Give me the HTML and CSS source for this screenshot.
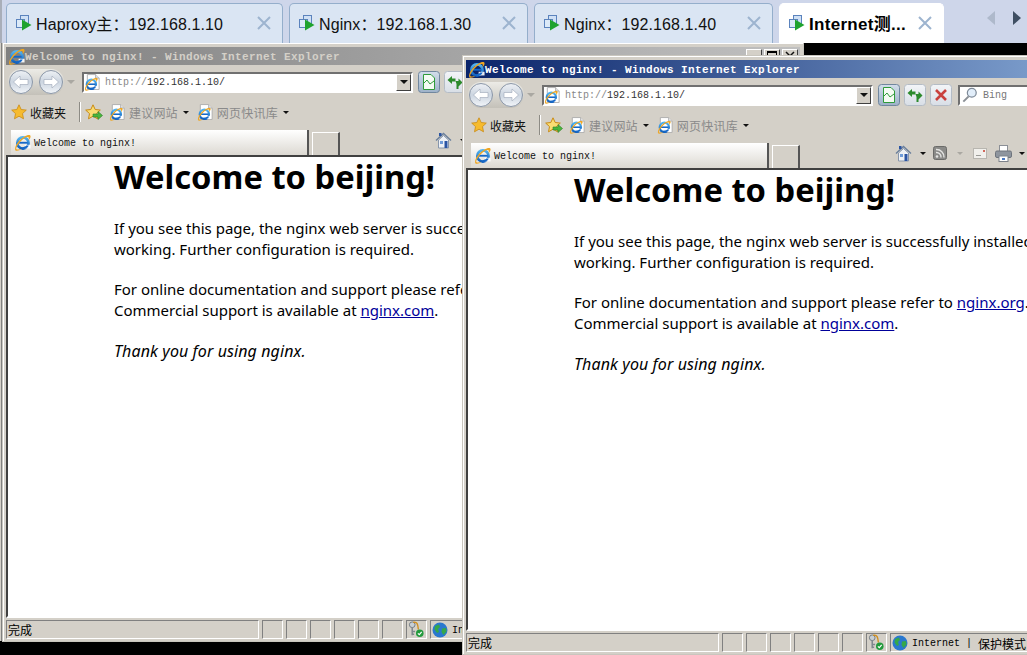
FILE: index.html
```html
<!DOCTYPE html>
<html>
<head>
    <title>Welcome to nginx!</title>
    <link rel="stylesheet" href="styles.css">
</head>
<body>
    <svg class="defs" width="0" height="0">
        <defs>
            <linearGradient id="glass" x1="0" y1="0" x2="0" y2="1">
                <stop offset="0" stop-color="#eef1f5"/>
                <stop offset=".5" stop-color="#ccd5e0"/>
                <stop offset="1" stop-color="#f2f5f9"/>
            </linearGradient>
            <linearGradient id="iceblue" x1="0" y1="0" x2="0" y2="1">
                <stop offset="0" stop-color="#53b4f0"/>
                <stop offset="1" stop-color="#0f5fbd"/>
            </linearGradient>
            <linearGradient id="press" x1="0" y1="0" x2="0" y2="1">
                <stop offset="0" stop-color="#d3deea"/>
                <stop offset=".55" stop-color="#b4c5d8"/>
                <stop offset="1" stop-color="#9db1c8"/>
            </linearGradient>
            <linearGradient id="btn" x1="0" y1="0" x2="0" y2="1">
                <stop offset="0" stop-color="#f3f5f8"/>
                <stop offset="1" stop-color="#d8dee6"/>
            </linearGradient>
            <symbol id="ie" viewBox="0 0 20 20">
                <circle cx="10.500" cy="10.500" r="6.600" fill="none" stroke="url(#iceblue)" stroke-width="3.200"/>
                <path d="M5.500 10.300H16" stroke="#1668c8" stroke-width="2.200"/>
                <path d="M12.500 12.700H19.500V17H12.500Z" fill="#fff" fill-opacity=".9"/>
                <path d="M10 15.300C12 15.300 13.500 14.600 14.500 13.500H17.300C16 16.500 13 18 10 18Z" fill="#1668c8"/>
                <path d="M1.500 19C.2 15.500 5 7 12 3.200C15.500 1.200 19.300 .3 19.500 2.800C19.600 4.500 18.300 6.300 17 7.500C17.500 5.500 17.800 3.800 16.500 3.500C12 2.800 3 13 2.500 17.500C4 18.500 7 18.200 9 17.300C6.500 19.500 2.800 20.300 1.500 19Z" fill="#eda522"/>
            </symbol>
            <symbol id="page" viewBox="0 0 16 18">
                <path d="M1.500 .5H11L15 4.500V17.500H1.500Z" fill="#fff" stroke="#a9a9a9"/>
                <path d="M11 .5V4.500H15" fill="#e6e6e6" stroke="#a9a9a9"/>
            </symbol>
            <symbol id="vm" viewBox="0 0 16 16">
                <rect x="4.500" y=".5" width="8" height="8" fill="#cfe0f5" stroke="#5b83bd"/>
                <rect x=".5" y="4.500" width="8" height="8" fill="#dceaf8" stroke="#5b83bd"/>
                <path d="M6 4.500L15.500 10L6 15.500Z" fill="#1fa32e"/>
            </symbol>
            <symbol id="close" viewBox="0 0 14 14">
                <path d="M1 1L13 13M13 1L1 13" stroke="#9db4cf" stroke-width="2"/>
            </symbol>
            <symbol id="winclose" viewBox="0 0 12 10">
                <path d="M2 1L10 9M10 1L2 9" stroke="#111" stroke-width="1.500"/>
            </symbol>
            <symbol id="star" viewBox="0 0 16 16">
                <path d="M8 .8L10.200 5.500L15.300 6.100L11.500 9.600L12.500 14.800L8 12.200L3.500 14.800L4.500 9.600L.7 6.100L5.800 5.500Z" fill="#f6bb2e" stroke="#c98a14" stroke-width=".8"/>
            </symbol>
            <symbol id="star-add" viewBox="0 0 18 17">
                <path d="M8 .8L10.200 5.500L15.300 6.100L11.500 9.600L12.500 14.800L8 12.200L3.500 14.800L4.500 9.600L.7 6.100L5.800 5.500Z" fill="#f9dd72" stroke="#c98a14"/>
                <path d="M8 10H13V7.500L17.500 11.500L13 15.500V13H8Z" fill="#49b53d" stroke="#2d7f26" stroke-width=".6"/>
            </symbol>
            <symbol id="arrow-left" viewBox="0 0 26 26">
                <circle cx="13" cy="13" r="11.500" fill="url(#glass)" stroke="#8b97a8"/>
                <path d="M5.500 13L12 7V10.500H20V15.500H12V19Z" fill="#fff" stroke="#9aa5b5" stroke-width=".6"/>
            </symbol>
            <symbol id="arrow-right" viewBox="0 0 26 26">
                <circle cx="13" cy="13" r="11.500" fill="url(#glass)" stroke="#8b97a8"/>
                <path d="M20.500 13L14 7V10.500H6V15.500H14V19Z" fill="#fff" stroke="#9aa5b5" stroke-width=".6"/>
            </symbol>
            <symbol id="chart" viewBox="0 0 22 22">
                <rect x=".5" y=".5" width="21" height="21" rx="3" fill="url(#press)" stroke="#71879e"/>
                <path d="M5.500 3.500H13L16.500 7V18.500H5.500Z" fill="#f4fbf3" stroke="#2f9b3a"/>
                <path d="M6 12L9 9L12 13L16 10" fill="none" stroke="#2f9b3a"/>
            </symbol>
            <symbol id="refresh" viewBox="0 0 22 22">
                <rect x=".5" y=".5" width="21" height="21" rx="3" fill="url(#btn)" stroke="#b4bcc6"/>
                <path d="M3.500 9L8 5V7.500H11.500V10.500H8V13Z" fill="#2c8a2c"/>
                <path d="M18.500 11.500L14.500 7.500V10H11.500L12.500 13V18H14.500V13.500L14.500 15.500Z" fill="#2c8a2c"/>
            </symbol>
            <symbol id="stop" viewBox="0 0 22 22">
                <rect x=".5" y=".5" width="21" height="21" rx="3" fill="url(#btn)" stroke="#b4bcc6"/>
                <path d="M6 6L16 16M16 6L6 16" stroke="#c9413e" stroke-width="2.600"/>
            </symbol>
            <symbol id="lens" viewBox="0 0 18 18">
                <circle cx="11" cy="6.500" r="5" fill="#e2eefa" stroke="#7f8b99" stroke-width="1.400"/>
                <path d="M7.500 10.500L1.500 16.500" stroke="#8a8f95" stroke-width="2.200"/>
            </symbol>
            <symbol id="home" viewBox="0 0 17 17">
                <path d="M1 8.500L8.500 1.500L16 8.500" fill="none" stroke="#6a7f9c" stroke-width="1.400"/>
                <path d="M3.500 8L8.500 3.500L13.500 8V16H3.500Z" fill="#eef1f6" stroke="#8796ac"/>
                <rect x="9.500" y="9" width="3" height="7" fill="#2a54a3"/>
                <rect x="5" y="9" width="3" height="3" fill="#6f9bd8"/>
                <rect x="4" y="1" width="2.500" height="3" fill="#2a54a3"/>
            </symbol>
            <symbol id="feed" viewBox="0 0 14 14">
                <rect x=".5" y=".5" width="13" height="13" rx="2" fill="#8a8a88" stroke="#6b6b69"/>
                <circle cx="4" cy="10.500" r="1.300" fill="#e4e4e2"/>
                <path d="M3 6.500A4.500 4.500 0 0 1 8 11.500M3 3.500A7.500 7.500 0 0 1 11 11.500" fill="none" stroke="#e4e4e2" stroke-width="1.400"/>
            </symbol>
            <symbol id="mail" viewBox="0 0 14 11">
                <rect x=".5" y=".5" width="13" height="10" fill="#f1f0ec" stroke="#b8b6b0"/>
                <path d="M3 7.500H8" stroke="#9a9a96"/>
                <rect x="10" y="2" width="2" height="2" fill="#d2685c"/>
            </symbol>
            <symbol id="printer" viewBox="0 0 17 17">
                <rect x="4.500" y=".5" width="8" height="6" fill="#fff" stroke="#8b8f96"/>
                <rect x=".5" y="6" width="16" height="6.500" rx="1.500" fill="#8e959e" stroke="#6e747c"/>
                <rect x="4" y="11" width="9" height="5.500" fill="#fff" stroke="#7d838b"/>
                <rect x="7" y="13" width="3" height="2" fill="#4979c4"/>
            </symbol>
            <symbol id="keys" viewBox="0 0 18 18">
                <circle cx="5" cy="4" r="3" fill="#c8cfd4" stroke="#747b82"/>
                <path d="M5 7V15M5 11H8M5 14H7" stroke="#7f878e" stroke-width="1.600"/>
                <path d="M6 1.500C10 .5 11 3 11.500 9" fill="none" stroke="#d08f1e" stroke-width="1.500"/>
                <circle cx="13" cy="13" r="4" fill="#229a3c"/>
                <path d="M11 13L12.500 14.500L15 11.500" fill="none" stroke="#fff" stroke-width="1.200"/>
            </symbol>
            <symbol id="globe" viewBox="0 0 16 16">
                <circle cx="8" cy="8" r="7.500" fill="#2a78cf"/>
                <path d="M3 4L7 2.500L8 5L6 7L7 10L5 11L2.500 7.500Z" fill="#35a84a"/>
                <path d="M10 6.500L14 6L14.500 9.500L11.500 13L9.500 10Z" fill="#35a84a"/>
            </symbol>
        </defs>
    </svg>

    <div class="tabbar">
        <div class="vmtab">
            <svg class="vmtab-icon"><use href="#vm"/></svg>
            <span class="vmtab-name">Haproxy主：192.168.1.10</span>
            <svg class="vmtab-close"><use href="#close"/></svg>
        </div>
        <div class="vmtab">
            <svg class="vmtab-icon"><use href="#vm"/></svg>
            <span class="vmtab-name">Nginx：192.168.1.30</span>
            <svg class="vmtab-close"><use href="#close"/></svg>
        </div>
        <div class="vmtab">
            <svg class="vmtab-icon"><use href="#vm"/></svg>
            <span class="vmtab-name">Nginx：192.168.1.40</span>
            <svg class="vmtab-close"><use href="#close"/></svg>
        </div>
        <div class="vmtab vmtab-active">
            <svg class="vmtab-icon"><use href="#vm"/></svg>
            <span class="vmtab-name">Internet测...</span>
            <svg class="vmtab-close"><use href="#close"/></svg>
        </div>
        <div class="tab-scroll">
            <span class="scroll-left"></span>
            <span class="scroll-right"></span>
        </div>
    </div>

    <div class="desktop">
        <div class="window window-back">
            <div class="titlebar">
                <svg class="title-logo"><use href="#ie"/></svg>
                <span class="title-text">Welcome to nginx! - Windows Internet Explorer</span>
                <div class="winbtns">
                    <span class="winbtn"></span>
                    <span class="winbtn winbtn-max"></span>
                    <span class="winbtn"><svg class="winclose"><use href="#winclose"/></svg></span>
                </div>
            </div>
            <div class="navrow">
                <div class="navbtns">
                    <svg class="navbtn"><use href="#arrow-left"/></svg>
                    <svg class="navbtn"><use href="#arrow-right"/></svg>
                </div>
                <span class="caret caret-light"></span>
                <div class="address">
                    <svg class="page-icon"><use href="#page"/></svg>
                    <svg class="page-logo"><use href="#ie"/></svg>
                    <span class="url"><span class="url-dim">http://</span>192.168.1.10/</span>
                    <span class="combo"><span class="caret"></span></span>
                </div>
                <svg class="toolbtn"><use href="#chart"/></svg>
                <svg class="toolbtn"><use href="#refresh"/></svg>
                <svg class="toolbtn"><use href="#stop"/></svg>
                <div class="search">
                    <svg class="lens"><use href="#lens"/></svg>
                    <span class="search-text">Bing</span>
                </div>
            </div>
            <div class="favrow">
                <svg class="fav-star"><use href="#star"/></svg>
                <span class="fav-label">收藏夹</span>
                <span class="fav-sep"></span>
                <svg class="fav-add"><use href="#star-add"/></svg>
                <div class="fav-link">
                    <svg class="page-icon"><use href="#page"/></svg>
                    <svg class="page-logo"><use href="#ie"/></svg>
                    <span class="fav-text">建议网站</span>
                    <span class="caret"></span>
                </div>
                <div class="fav-link">
                    <svg class="page-icon"><use href="#page"/></svg>
                    <svg class="page-logo"><use href="#ie"/></svg>
                    <span class="fav-text">网页快讯库</span>
                    <span class="caret"></span>
                </div>
            </div>
            <div class="ietabs">
                <div class="ietab">
                    <svg class="ietab-logo"><use href="#ie"/></svg>
                    <span class="ietab-text">Welcome to nginx!</span>
                </div>
                <div class="ietab-new"></div>
                <div class="cmdbar">
                    <svg class="cmd-home"><use href="#home"/></svg>
                    <span class="caret"></span>
                    <svg class="cmd-feed"><use href="#feed"/></svg>
                    <span class="caret caret-light"></span>
                    <svg class="cmd-mail"><use href="#mail"/></svg>
                    <svg class="cmd-print"><use href="#printer"/></svg>
                    <span class="caret"></span>
                </div>
            </div>
            <div class="page">
                <h1>Welcome to beijing!</h1>
                <p>If you see this page, the nginx web server is successfully installed and<br>working. Further configuration is required.</p>
                <p>For online documentation and support please refer to <a href="#">nginx.org</a>.<br>Commercial support is available at <a href="#">nginx.com</a>.</p>
                <p class="thanks"><em>Thank you for using nginx.</em></p>
            </div>
            <div class="statusbar">
                <span class="status-main">完成</span>
                <span class="status-cell"></span>
                <span class="status-cell"></span>
                <span class="status-cell"></span>
                <span class="status-cell"></span>
                <span class="status-cell"></span>
                <span class="status-cell"></span>
                <span class="status-cell"><svg class="status-keys"><use href="#keys"/></svg></span>
                <span class="status-zone">
                    <svg class="status-globe"><use href="#globe"/></svg>
                    <span class="zone-text">Internet | </span><span class="zone-mode">保护模式</span>
                </span>
            </div>
        </div>

        <div class="window window-front">
            <div class="titlebar">
                <svg class="title-logo"><use href="#ie"/></svg>
                <span class="title-text">Welcome to nginx! - Windows Internet Explorer</span>
            </div>
            <div class="navrow">
                <div class="navbtns">
                    <svg class="navbtn"><use href="#arrow-left"/></svg>
                    <svg class="navbtn"><use href="#arrow-right"/></svg>
                </div>
                <span class="caret caret-light"></span>
                <div class="address">
                    <svg class="page-icon"><use href="#page"/></svg>
                    <svg class="page-logo"><use href="#ie"/></svg>
                    <span class="url"><span class="url-dim">http://</span>192.168.1.10/</span>
                    <span class="combo"><span class="caret"></span></span>
                </div>
                <svg class="toolbtn"><use href="#chart"/></svg>
                <svg class="toolbtn"><use href="#refresh"/></svg>
                <svg class="toolbtn"><use href="#stop"/></svg>
                <div class="search">
                    <svg class="lens"><use href="#lens"/></svg>
                    <span class="search-text">Bing</span>
                </div>
            </div>
            <div class="favrow">
                <svg class="fav-star"><use href="#star"/></svg>
                <span class="fav-label">收藏夹</span>
                <span class="fav-sep"></span>
                <svg class="fav-add"><use href="#star-add"/></svg>
                <div class="fav-link">
                    <svg class="page-icon"><use href="#page"/></svg>
                    <svg class="page-logo"><use href="#ie"/></svg>
                    <span class="fav-text">建议网站</span>
                    <span class="caret"></span>
                </div>
                <div class="fav-link">
                    <svg class="page-icon"><use href="#page"/></svg>
                    <svg class="page-logo"><use href="#ie"/></svg>
                    <span class="fav-text">网页快讯库</span>
                    <span class="caret"></span>
                </div>
            </div>
            <div class="ietabs">
                <div class="ietab">
                    <svg class="ietab-logo"><use href="#ie"/></svg>
                    <span class="ietab-text">Welcome to nginx!</span>
                </div>
                <div class="ietab-new"></div>
                <div class="cmdbar">
                    <svg class="cmd-home"><use href="#home"/></svg>
                    <span class="caret"></span>
                    <svg class="cmd-feed"><use href="#feed"/></svg>
                    <span class="caret caret-light"></span>
                    <svg class="cmd-mail"><use href="#mail"/></svg>
                    <svg class="cmd-print"><use href="#printer"/></svg>
                    <span class="caret"></span>
                </div>
            </div>
            <div class="page">
                <h1>Welcome to beijing!</h1>
                <p>If you see this page, the nginx web server is successfully installed and<br>working. Further configuration is required.</p>
                <p>For online documentation and support please refer to <a href="#">nginx.org</a>.<br>Commercial support is available at <a href="#">nginx.com</a>.</p>
                <p class="thanks"><em>Thank you for using nginx.</em></p>
            </div>
            <div class="statusbar">
                <span class="status-main">完成</span>
                <span class="status-cell"></span>
                <span class="status-cell"></span>
                <span class="status-cell"></span>
                <span class="status-cell"></span>
                <span class="status-cell"></span>
                <span class="status-cell"></span>
                <span class="status-cell"><svg class="status-keys"><use href="#keys"/></svg></span>
                <span class="status-zone">
                    <svg class="status-globe"><use href="#globe"/></svg>
                    <span class="zone-text">Internet | </span><span class="zone-mode">保护模式</span>
                </span>
            </div>
        </div>
    </div>
</body>
</html>
```

FILE: styles.css
```css
html, body {
    height: 655px;
    margin: 0;
    padding: 0;
    overflow: hidden;
    font-family: "Liberation Sans", "Noto Sans CJK SC", sans-serif;
}

.defs {
    position: absolute;
}

/* top tab strip */
.tabbar {
    display: flex;
    gap: 6px;
    height: 40px;
    padding: 3px 0 0 6px;
    background-color: #ced6ea;
    border-left: 2px solid #a9aeb8;
    box-sizing: content-box;
}

.vmtab {
    display: flex;
    align-items: center;
    flex: none;
    width: 239px;
    box-sizing: border-box;
    padding: 0 9px 2px 9px;
    background-color: #dae5f3;
    border: 1px solid #94aecb;
    border-bottom: none;
    border-radius: 5px 5px 0 0;
}

.vmtab:first-child {
    width: 277px;
    margin-left: -2px;
}

.vmtab-active {
    width: 165px;
    background-color: #fff;
    border-color: #fff;
}

.vmtab-icon {
    flex: none;
    width: 16px;
    height: 16px;
    margin-right: 4px;
}

.vmtab-name {
    flex: 1;
    font-size: 16px;
    letter-spacing: .1px;
    white-space: nowrap;
    color: #111;
}

.vmtab-active .vmtab-name {
    font-size: 17px;
    font-weight: bold;
    letter-spacing: .3px;
    color: #000;
}

.vmtab-close {
    flex: none;
    width: 14px;
    height: 14px;
    margin-right: 2px;
}

.tab-scroll {
    display: flex;
    align-items: center;
    gap: 18px;
    margin-left: 37px;
    height: 30px;
}

.scroll-left {
    border-style: solid;
    border-width: 7px 8px 7px 0;
    border-color: transparent #aeb9cb transparent transparent;
}

.scroll-right {
    border-style: solid;
    border-width: 7px 0 7px 8px;
    border-color: transparent transparent transparent #3f4f63;
}

/* the console area with the two browser windows on it */
.desktop {
    position: relative;
    height: 612px;
    background-color: #000;
    overflow: hidden;
}

.window {
    position: absolute;
    display: flex;
    flex-direction: column;
    width: 800px;
    height: 598px;
    box-sizing: border-box;
    padding: 3px 3px 2px 2px;
    background-color: #d4d0c8;
    border-top: 1px solid #fff;
    border-left: 1px solid #fff;
    box-shadow: 0 0 0 1px #c9c6be;
}

.window-back {
    left: 3px;
    top: 0;
    box-shadow: 0 0 0 1px #c9c6be, -2px 0 0 #808080, -3px 0 0 #d4d0c8;
}

.window-front {
    left: 463px;
    top: 13px;
}

.titlebar {
    display: flex;
    align-items: center;
    flex: none;
    height: 18px;
    padding-left: 2px;
    background: linear-gradient(to right, #808080, #c0c0c0);
}

.window-front .titlebar {
    background: linear-gradient(to right, #0a246a, #a6caf0);
}

.title-logo {
    flex: none;
    width: 17px;
    height: 17px;
}

.title-text {
    flex: 1;
    padding-top: 1px;
    font-family: "Liberation Mono", "Noto Sans CJK SC", monospace;
    font-size: 11px;
    font-weight: bold;
    letter-spacing: .4px;
    color: #d4d0c8;
    white-space: nowrap;
}

.window-front .title-text {
    color: #fff;
}

.winbtns {
    display: flex;
    gap: 2px;
    padding-right: 2px;
}

.winbtn {
    display: flex;
    align-items: center;
    justify-content: center;
    width: 16px;
    height: 14px;
    box-sizing: border-box;
    background-color: #d4d0c8;
    border: 1px solid;
    border-color: #fff #404040 #404040 #fff;
}

.winbtn-max::before {
    content: "";
    width: 10px;
    height: 10px;
    box-sizing: border-box;
    border: 1px solid #000;
    border-top-width: 2px;
}

.winclose {
    width: 12px;
    height: 10px;
}

.navrow {
    display: flex;
    align-items: center;
    flex: none;
    height: 34px;
    padding: 0 0 0 2px;
}

.navbtns {
    display: flex;
    gap: 4px;
    flex: none;
    width: 56px;
    border-radius: 14px;
    background: linear-gradient(to bottom, #ecebe6, #c4c1b9);
}

.navbtn {
    width: 26px;
    height: 26px;
}

.caret {
    display: inline-block;
    flex: none;
    width: 0;
    height: 0;
    border-style: solid;
    border-width: 3px 3px 0 3px;
    border-color: #111 transparent transparent transparent;
}

.caret-light {
    border-color: #aaa8a2 transparent transparent transparent;
}

.navrow > .caret {
    margin-left: 3px;
    border-width: 4px 4px 0 4px;
}

.address {
    display: flex;
    align-items: center;
    flex: none;
    width: 331px;
    height: 21px;
    margin: 0 5px 0 7px;
    box-sizing: border-box;
    background-color: #fff;
    border: 2px solid;
    border-color: #707070 #fff #fff #707070;
}

.page-icon {
    flex: none;
    width: 14px;
    height: 16px;
    margin-left: 2px;
}

.page-logo {
    flex: none;
    width: 14px;
    height: 14px;
    margin: 3px 0 0 -16px;
}

.url {
    flex: 1;
    margin-left: 7px;
    padding-top: 1px;
    font-family: "Liberation Mono", monospace;
    font-size: 10px;
    color: #333;
    white-space: nowrap;
}

.url-dim {
    color: #888;
}

.combo {
    display: flex;
    align-items: center;
    justify-content: center;
    flex: none;
    width: 15px;
    height: 17px;
    background-color: #d4d0c8;
    border: 1px solid;
    border-color: #fff #404040 #404040 #fff;
    box-sizing: border-box;
}

.combo .caret {
    border-width: 4px 4px 0 4px;
}

.toolbtn {
    flex: none;
    width: 22px;
    height: 22px;
    margin-right: 4px;
}

.search {
    display: flex;
    align-items: center;
    flex: none;
    width: 200px;
    height: 21px;
    margin-left: 2px;
    box-sizing: border-box;
    background-color: #fff;
    border: 2px solid;
    border-color: #707070 #fff #fff #707070;
}

.lens {
    width: 16px;
    height: 16px;
    margin-left: 2px;
}

.search-text {
    margin-left: 5px;
    font-family: "Liberation Mono", monospace;
    font-size: 10px;
    color: #777;
}

.favrow {
    display: flex;
    align-items: center;
    flex: none;
    height: 26px;
    padding: 0 0 2px 5px;
}

.fav-star {
    width: 16px;
    height: 16px;
}

.fav-label {
    margin-left: 3px;
    font-size: 12px;
    color: #111;
}

.fav-sep {
    width: 1px;
    height: 20px;
    margin: 0 4px 0 13px;
    background-color: #8d8b85;
    border-right: 1px solid #fff;
}

.fav-add {
    width: 18px;
    height: 17px;
}

.fav-link {
    display: flex;
    align-items: center;
    margin-left: 8px;
    margin-right: 2px;
}

.fav-link .page-icon {
    margin-left: 0;
}

.fav-text {
    margin: 0 5px 0 6px;
    font-size: 12px;
    letter-spacing: .2px;
    color: #8a8a8a;
}

.ietabs {
    display: flex;
    align-items: flex-end;
    flex: none;
    height: 28px;
    padding-left: 5px;
}

.ietab {
    display: flex;
    align-items: center;
    width: 298px;
    height: 25px;
    box-sizing: border-box;
    padding-left: 3px;
    background: linear-gradient(to bottom, #fff, #dcd9d2);
    border-right: 2px solid #555;
}

.ietab-logo {
    flex: none;
    width: 17px;
    height: 17px;
}

.ietab-text {
    margin-left: 3px;
    padding-top: 2px;
    font-family: "Liberation Mono", monospace;
    font-size: 10px;
    color: #111;
}

.ietab-new {
    width: 28px;
    height: 23px;
    margin-left: 3px;
    box-sizing: border-box;
    border: 1px solid #fff;
    border-right: 2px solid #555;
    border-bottom: none;
}

.cmdbar {
    display: flex;
    align-items: center;
    gap: 7px;
    height: 24px;
    margin: 0 0 3px 95px;
}

.cmd-home {
    width: 17px;
    height: 17px;
}

.cmd-home + .caret {
    margin-left: 1px;
}

.cmd-feed {
    width: 14px;
    height: 14px;
}

.cmd-feed + .caret {
    margin-left: 3px;
}

.cmd-mail {
    width: 14px;
    height: 11px;
    margin-left: 3px;
}

.cmd-print {
    width: 17px;
    height: 17px;
    margin-left: 1px;
}

.page {
    flex: 1;
    min-height: 0;
    padding: 0 0 0 106px;
    overflow: hidden;
    background-color: #fff;
    border: 2px solid;
    border-color: #404040 #fff #fff #404040;
    font-family: "Noto Sans", sans-serif;
    font-size: 15px;
    line-height: 21px;
    color: #000;
    white-space: nowrap;
}

.page h1 {
    margin: 1px 0 22px;
    font-size: 32.700px;
    line-height: 38px;
    font-weight: bold;
}

.page p {
    margin: 0 0 19px;
}

.page .thanks {
    margin-top: 20px;
}

.page em {
    font-size: 16px;
    letter-spacing: .1px;
}

.page a {
    color: #00009a;
}

.statusbar {
    display: flex;
    flex: none;
    gap: 3px;
    height: 19px;
    margin-top: 2px;
    font-size: 12px;
}

.status-main {
    flex: none;
    width: 253px;
    box-sizing: border-box;
    padding-left: 1px;
    line-height: 20px;
    border: 1px solid;
    border-color: #808080 #fff #fff #808080;
}

.status-cell {
    flex: none;
    width: 21px;
    box-sizing: border-box;
    border: 1px solid;
    border-color: #808080 #fff #fff #808080;
}

.status-keys {
    display: block;
    width: 18px;
    height: 17px;
}

.status-zone {
    display: flex;
    align-items: center;
    flex: 1;
    box-sizing: border-box;
    padding: 1px 0 0 1px;
    border: 1px solid;
    border-color: #808080 #fff #fff #808080;
    white-space: nowrap;
}

.status-globe {
    flex: none;
    width: 16px;
    height: 16px;
}

.zone-text {
    margin-left: 4px;
    font-family: "Liberation Mono", monospace;
    font-size: 10px;
    white-space: pre;
}

.zone-mode {
    font-size: 12px;
}
```
